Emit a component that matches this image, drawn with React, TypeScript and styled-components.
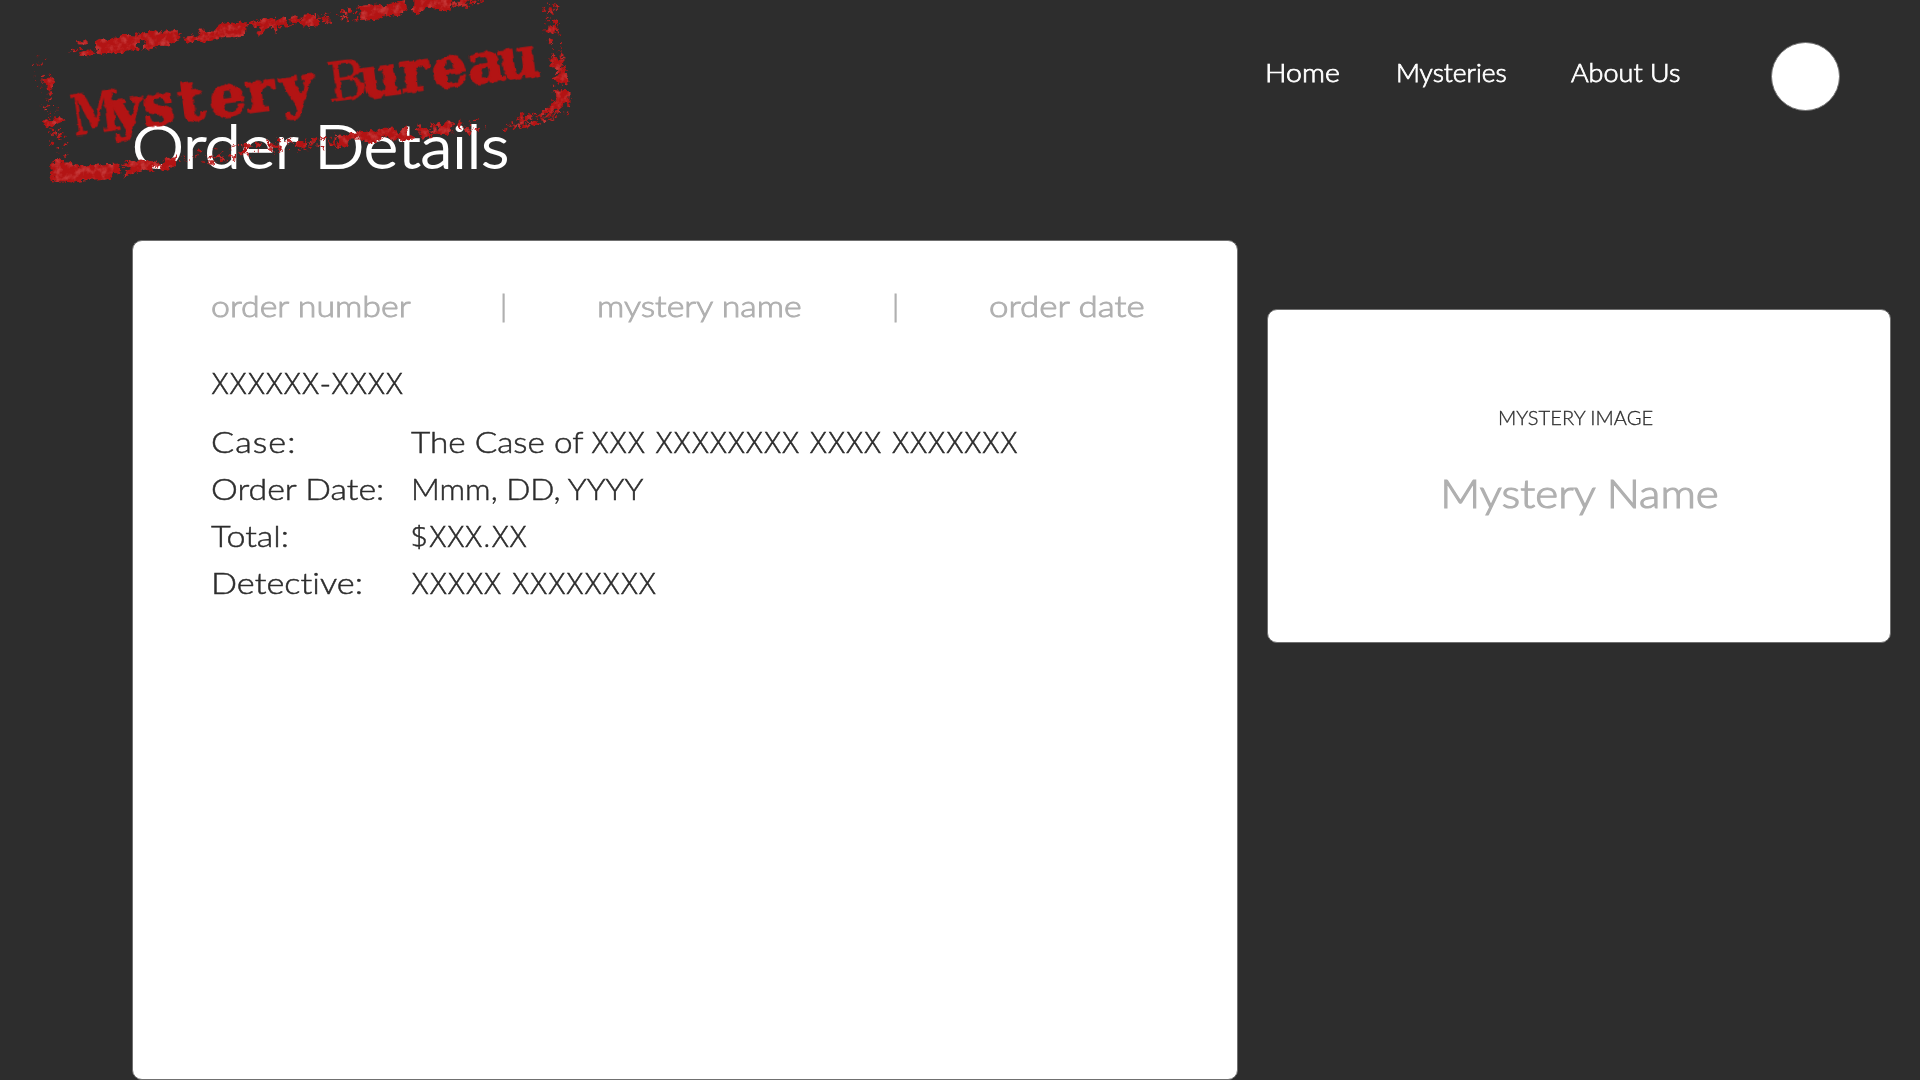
import React from "react";
import styled, { createGlobalStyle } from "styled-components";

const GlobalStyle = createGlobalStyle`
  * { box-sizing: border-box; }
  body { margin: 0; background: #2d2d2d; overflow: hidden; }
`;

const ink = "#2d2d2d";
const muted = "#b0b0b0";
const paper = "#ffffff";
const stampRed = "#b31414";

const Page = styled.div`
  position: relative;
  width: 1920px;
  height: 1080px;
  overflow: hidden;
  background: ${ink};
  font-family: "Century Gothic", Lato, sans-serif;
  font-weight: 300;
  font-size: 30px;
  line-height: 36px;
  color: ${ink};
`;

const Run = styled.span<{ $k?: number; $ls?: number; $heavy?: boolean }>`
  display: inline-block;
  white-space: pre;
  letter-spacing: ${p => p.$ls ?? 0}px;
  font-variant-ligatures: none;
  transform: scaleX(${p => p.$k ?? 1});
  transform-origin: left center;
  will-change: transform;
  -webkit-text-stroke: ${p => (p.$heavy ? "0.03em" : "0.016em")} currentColor;
`;

const Placeholder = styled(Run)`
  font-family: "Century Gothic", "Open Sans", sans-serif;
`;

const Header = styled.header`
  display: flex;
  justify-content: flex-end;
  align-items: flex-start;
  height: 109px;
  padding-right: 80px;
`;

const Nav = styled.nav`
  display: flex;
  padding-top: 57px;
  font-size: 25px;
  line-height: 30px;
  color: ${paper};
`;

const NavLink = styled.a<{ $w: number }>`
  width: ${p => p.$w}px;
  color: inherit;
  text-decoration: none;
`;

const Avatar = styled.div`
  width: 69px;
  height: 69px;
  margin-top: 42px;
  border: 1px solid #707070;
  border-radius: 50%;
  background: ${paper};
`;

const Title = styled.h1`
  margin: 0 0 59px 132px;
  height: 72px;
  font-size: 60px;
  font-weight: 300;
  line-height: 72px;
  color: ${paper};
`;

const Content = styled.main`
  display: flex;
  align-items: flex-start;
  gap: 29px;
  padding-left: 132px;
`;

const Card = styled.section`
  border: 1px solid #707070;
  border-radius: 10px;
  background: ${paper};
`;

const OrderCard = styled(Card)`
  width: 1106px;
  height: 840px;
  padding: 46px 0 0 78px;
`;

const ColumnHeads = styled.div`
  display: grid;
  grid-template-columns: 289px 97px 295px 97px auto;
  color: ${muted};
`;

const OrderNumber = styled.div`
  height: 36px;
  margin-top: 41px;
  padding-left: 1px;
  line-height: 36px;
`;

const Details = styled.dl`
  display: grid;
  grid-template-columns: 200px auto;
  grid-auto-rows: 47px;
  align-items: baseline;
  margin: 23px 0 0;
`;

const Term = styled.dt``;
const Value = styled.dd<{ $inset?: number }>`
  display: flex;
  align-items: baseline;
  margin: 0;
  padding-left: ${p => p.$inset ?? 0}px;
`;
const Phrase = styled.span`
  width: 181px;
`;

const MysteryCard = styled(Card)`
  display: flex;
  flex-direction: column;
  align-items: center;
  width: 624px;
  height: 334px;
  margin-top: 69px;
  padding-top: 95px;
`;

const ImageLabel = styled.div`
  font-size: 20px;
  line-height: 24px;
  margin-right: 7px;
`;

const MysteryName = styled.div`
  margin: 40px 0 0 1px;
  font-size: 40px;
  line-height: 48px;
  color: ${muted};
  span { transform-origin: center; }
`;

const Stamp = styled.svg`
  position: absolute;
  left: 0;
  top: 0;
  width: 600px;
  height: 200px;
  pointer-events: none;
`;

/* Solid worn patches of the stamp frame */
const patches = [
  "285,125 300,118 325,122 335,115 360,113 365,105 395,108 430,98 470,96 485,103 500,92 528,95 530,118 515,125 500,132 470,135 450,142 425,145 435,125 422,116 405,132 410,145 390,145 360,155 330,157 305,160 288,158 295,145 283,140",
  "232,125 258,126 256,133 236,132", "237,158 262,150 278,160 260,165 240,164",
  "555,115 590,108 605,96 600,84 615,98 645,95 655,75 690,70 732,65 730,100 700,108 660,108 640,115 610,122 590,118 560,127",
  "735,78 770,60 820,52 822,65 850,52 862,78 845,70 830,72 825,95 812,77 790,85 785,100 770,100 785,80 750,72",
  "872,50 895,65 915,45 945,42 947,75 920,80 905,68 875,65",
  "1075,20 1110,15 1150,17 1210,5 1217,25 1190,45 1160,40 1130,55 1080,60 1085,40",
  "1240,-5 1345,-5 1350,28 1320,30 1305,22 1275,20 1250,40 1238,35",
  "1375,-5 1402,-5 1395,20 1380,12",
  "130,240 150,234 160,248 145,270 140,252",
  "132,362 150,365 176,350 188,358 160,372 134,374",
  "150,492 175,476 190,488 205,490 235,500 290,495 355,492 350,508 335,520 330,530 290,535 260,535 220,545 180,540 160,545 152,520",
  "370,490 420,480 465,487 450,505 400,515 372,522 395,505",
  "480,500 500,485 525,470 520,495 490,508",
  "1000,405 1030,412 1060,400 1110,392 1120,402 1150,385 1180,385 1190,410 1215,380 1220,408 1240,412 1180,418 1150,404 1130,420 1110,428 1080,412 1045,412 1035,436 1010,436 1018,415",
  "1255,375 1275,388 1290,408 1265,412", "1300,400 1345,365 1350,368 1340,402",
  "1655,165 1672,180 1685,182 1678,210 1660,205",
  "1665,235 1690,205 1695,212 1700,250 1680,245",
  "1668,272 1703,275 1703,312 1690,308 1670,325 1640,330 1665,300",
  "1643,84 1665,74 1672,92 1645,94",
];

type Band = { a: [number, number]; b: [number, number]; thick: number; n: number; size: number };
const bands: Band[] = [
  { a: [195, 165], b: [300, 140], thick: 22, n: 12, size: 5 },
  { a: [470, 115], b: [640, 105], thick: 24, n: 16, size: 7 },
  { a: [830, 70], b: [1080, 40], thick: 36, n: 60, size: 8 },
  { a: [1360, 8], b: [1450, -2], thick: 26, n: 26, size: 9 },
  { a: [112, 165], b: [185, 490], thick: 52, n: 85, size: 6 },
  { a: [330, 512], b: [560, 485], thick: 34, n: 36, size: 8 },
  { a: [560, 478], b: [880, 430], thick: 48, n: 60, size: 8 },
  { a: [870, 438], b: [1010, 425], thick: 34, n: 38, size: 9 },
  { a: [1240, 400], b: [1350, 385], thick: 30, n: 16, size: 8 },
  { a: [1290, 390], b: [1460, 370], thick: 34, n: 42, size: 9 },
  { a: [1500, 382], b: [1545, 378], thick: 22, n: 12, size: 8 },
  { a: [1550, 365], b: [1700, 335], thick: 36, n: 80, size: 8 },
  { a: [1645, 0], b: [1680, 320], thick: 44, n: 80, size: 7 },
];

/* Small seeded generator, so the wear pattern is the same on every load */
function specks(): string[] {
  let seed = 20;
  const rnd = () => {
    seed = (seed * 1664525 + 1013904223) % 4294967296;
    return seed / 4294967296;
  };
  const out: string[] = [];
  for (const { a, b, thick, n, size } of bands) {
    const dx = b[0] - a[0], dy = b[1] - a[1], len = Math.hypot(dx, dy);
    for (let i = 0; i < n; i++) {
      const t = rnd(), off = (rnd() - 0.5) * thick;
      const cx = a[0] + dx * t - (dy / len) * off;
      const cy = a[1] + dy * t + (dx / len) * off;
      const s = size * (0.25 + rnd() * rnd() * 1.2);
      const turn = rnd() * 6.28;
      const pts: string[] = [];
      for (let k = 0; k < 6; k++) {
        const ang = turn + (k * Math.PI) / 3;
        const r = s * (0.4 + rnd() * 1.1);
        pts.push(`${(cx + Math.cos(ang) * r).toFixed(1)},${(cy + Math.sin(ang) * r * 0.8).toFixed(1)}`);
      }
      out.push(pts.join(" "));
    }
  }
  return out;
}
const speckShapes = specks();

const StampType = styled.text`
  font-family: "DejaVu Serif", serif;
  font-weight: 700;
  font-kerning: none;
  font-variant-ligatures: none;
  text-anchor: middle;
  fill: ${stampRed};
  stroke: ${stampRed};
`;

function BureauStamp() {
  return (
    <Stamp viewBox="0 0 1800 600" aria-label="Mystery Bureau">
      <defs>
        <filter id="worn" filterUnits="userSpaceOnUse" x="0" y="-20" width="1800" height="620" colorInterpolationFilters="sRGB">
          <feTurbulence type="fractalNoise" baseFrequency="0.07" numOctaves="3" seed="4" result="rough" />
          <feDisplacementMap in="SourceGraphic" in2="rough" scale="20" xChannelSelector="R" yChannelSelector="G" result="shape" />
          <feTurbulence type="fractalNoise" baseFrequency="0.05" numOctaves="3" seed="9" result="cloud" />
          <feColorMatrix in="cloud" type="matrix" values="0 0 0 0 0.8  0 0 0 0 0.27  0 0 0 0 0.27  3 0 0 0 -1.3" result="light" />
          <feComponentTransfer in="light" result="soft"><feFuncA type="linear" slope="0.7" /></feComponentTransfer>
          <feComposite in="soft" in2="shape" operator="in" result="tint" />
          <feMerge><feMergeNode in="shape" /><feMergeNode in="tint" /></feMerge>
        </filter>
        <filter id="inked" filterUnits="userSpaceOnUse" x="-60" y="-220" width="1800" height="360" colorInterpolationFilters="sRGB">
          <feTurbulence type="fractalNoise" baseFrequency="0.05" numOctaves="2" seed="7" result="rough" />
          <feDisplacementMap in="SourceGraphic" in2="rough" scale="13" xChannelSelector="R" yChannelSelector="G" />
        </filter>
      </defs>
      <g fill={stampRed} filter="url(#worn)" transform="translate(3 1)">
        <g stroke={stampRed} strokeWidth="5">
          {patches.map(p => <polygon key={p} points={p} />)}
        </g>
        {speckShapes.map(p => <polygon key={p} points={p} />)}
      </g>
      <g transform="translate(237 405) rotate(-7.42)" filter="url(#inked)">
        <StampType transform="scale(0.8 1)" fontSize="168" strokeWidth="1">
          <tspan x="72">M</tspan>
        </StampType>
        <StampType fontSize="170" strokeWidth="5">
          <tspan x="151">y</tspan>
          <tspan x="247">s</tspan>
          <tspan x="346">t</tspan>
          <tspan x="456">e</tspan>
          <tspan x="555">r</tspan>
          <tspan x="666">y</tspan>
          <tspan x="740"> </tspan>
          <tspan x="817" fontSize="160" fontWeight="400" strokeWidth="1">B</tspan>
          <tspan x="917">u</tspan>
          <tspan x="1021">r</tspan>
          <tspan x="1127">e</tspan>
          <tspan x="1237">a</tspan>
          <tspan x="1336">u</tspan>
        </StampType>
      </g>
    </Stamp>
  );
}

export default function App() {
  return (
    <>
      <GlobalStyle />
      <Page>
        <Header>
          <Nav>
            <NavLink $w={131}><Run $heavy $k={1.14}>Home</Run></NavLink>
            <NavLink $w={175}><Run $heavy $k={1.055}>Mysteries</Run></NavLink>
            <NavLink $w={200}><Run $heavy $k={1.08}>About Us</Run></NavLink>
          </Nav>
          <Avatar />
        </Header>
        <Title><Run $heavy $k={1.093}>Order Details</Run></Title>
        <Content>
          <OrderCard>
            <ColumnHeads>
              <Run $heavy $k={1.13}>order number</Run>
              <Run $heavy>|</Run>
              <Run $heavy $k={1.13}>mystery name</Run>
              <Run $heavy>|</Run>
              <Run $heavy $k={1.166}>order date</Run>
            </ColumnHeads>
            <OrderNumber><Placeholder $ls={1.95}>XXXXXX-XXXX</Placeholder></OrderNumber>
            <Details>
              <Term><Run $k={1.14} $ls={0.9}>Case:</Run></Term>
              <Value>
                <Phrase><Run $k={1.11}>The Case of </Run></Phrase>
                <Placeholder $ls={1.95}>XXX XXXXXXXX XXXX XXXXXXX</Placeholder>
              </Value>
              <Term><Run $k={1.13}>Order Date:</Run></Term>
              <Value><Run $k={1.058}>Mmm, DD, YYYY</Run></Value>
              <Term><Run $k={1.135}>Total:</Run></Term>
              <Value><Placeholder $ls={1.7}>$XXX.XX</Placeholder></Value>
              <Term><Run $k={1.145}>Detective:</Run></Term>
              <Value $inset={1}><Placeholder $ls={2}>XXXXX XXXXXXXX</Placeholder></Value>
            </Details>
          </OrderCard>
          <MysteryCard>
            <ImageLabel><Run $k={1.005}>MYSTERY IMAGE</Run></ImageLabel>
            <MysteryName><Run $heavy $k={1.1}>Mystery Name</Run></MysteryName>
          </MysteryCard>
        </Content>
        <BureauStamp />
      </Page>
    </>
  );
}
